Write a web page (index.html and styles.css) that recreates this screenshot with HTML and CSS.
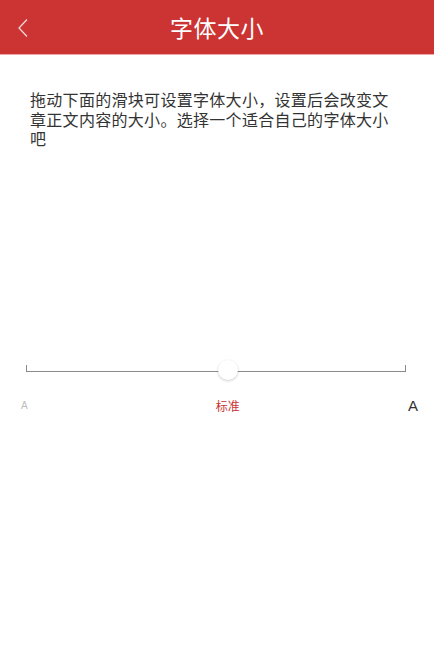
FILE: index.html
```html
<!DOCTYPE html>
<html lang="zh">
<head>
<meta charset="utf-8">
<link rel="stylesheet" href="styles.css">
</head>
<body>
<header class="nav">
  <svg class="back" width="12" height="20" viewBox="0 0 12 20"><path d="M10 1.5 L2 10 L10 18.5" fill="none" stroke="#f6d6d6" stroke-width="1.3"/></svg>
  <h1 class="title">字体大小</h1>
</header>
<p class="desc">拖动下面的滑块可设置字体大小，设置后会改变文章正文内容的大小。选择一个适合自己的字体大小吧</p>
<div class="slider">
  <div class="track">
    <div class="thumb"></div>
  </div>
  <div class="labels">
    <span class="small">A</span>
    <span class="std">标准</span>
    <span class="big">A</span>
  </div>
</div>
</body>
</html>
```
FILE: styles.css
```css
html, body {
  margin: 0;
  padding: 0;
  background: #fff;
  font-family: "Noto Sans CJK SC", "Noto Sans", sans-serif;
}
.nav {
  height: 54px;
  background: #cc3333;
  border-bottom: 1px solid #eea7a7;
  display: flex;
  align-items: center;
  justify-content: center;
  position: relative;
}
.back {
  position: absolute;
  left: 17px;
  top: 18px;
}
.title {
  margin: 0;
  color: #fff;
  font-size: 23px;
  font-weight: 400;
  letter-spacing: 0.5px;
}
.desc {
  margin: 35px 0 0;
  padding: 0 30px;
  font-size: 16px;
  letter-spacing: 0.3px;
  line-height: 19.5px;
  color: #333;
}
.slider {
  margin-top: 216px;
  padding: 0 28px 0 26px;
}
.track {
  height: 6px;
  border: 1.5px solid #8a8a8a;
  border-top: none;
  position: relative;
}
.thumb {
  position: absolute;
  left: 191px;
  top: -5px;
  width: 20px;
  height: 20px;
  border-radius: 50%;
  background: #fff;
  box-shadow: 0 1px 3px rgba(0,0,0,0.2);
}
.labels {
  display: flex;
  justify-content: space-between;
  align-items: center;
  margin: 25px -12px 0 -5px;
}
.small {
  font-family: "Liberation Sans", sans-serif;
  font-size: 10px;
  color: #bdbdbd;
}
.std {
  font-size: 12px;
  color: #cc3333;
  margin-left: 20px;
}
.big {
  font-family: "Liberation Sans", sans-serif;
  font-size: 15px;
  color: #333;
}
```
